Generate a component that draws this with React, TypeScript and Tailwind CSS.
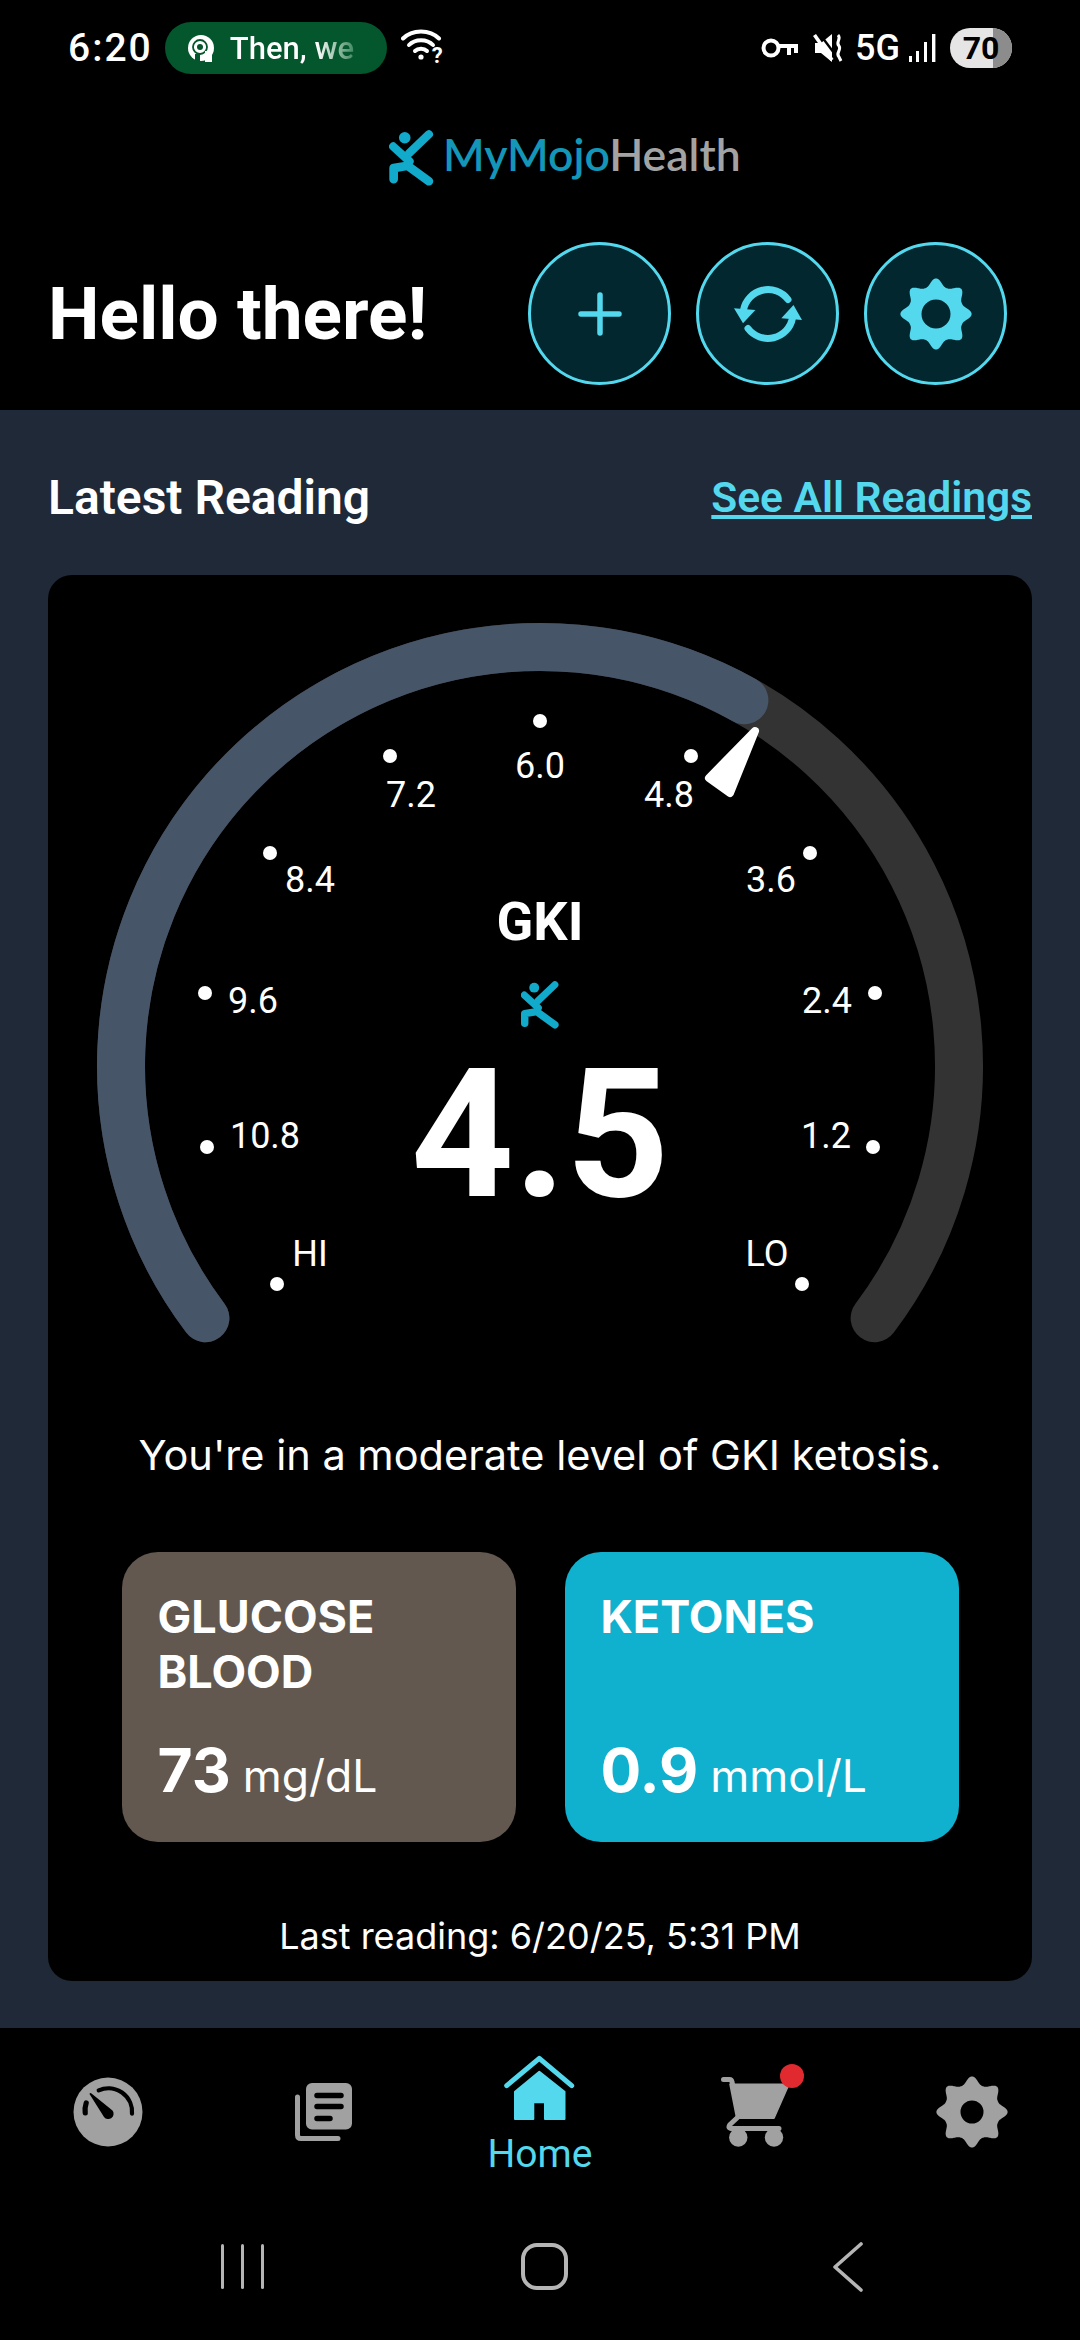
import React from "react";

const CYAN = "#53d8ee";

// point on the gauge ring, angle in degrees from 12 o'clock
const polar = (deg: number, r: number, cx = 492, cy = 491) => {
  const a = (deg * Math.PI) / 180;
  return [cx + r * Math.sin(a), cy - r * Math.cos(a)];
};

const arc = (from: number, to: number, r: number) => {
  const [x1, y1] = polar(from, r);
  const [x2, y2] = polar(to, r);
  const large = to - from > 180 ? 1 : 0;
  return `M${x1} ${y1} A${r} ${r} 0 ${large} 1 ${x2} ${y2}`;
};

const dots = [
  [492, 146], [342, 181], [643, 181], [222, 278], [762, 278], [157, 418],
  [827, 418], [159, 572], [825, 572], [229, 709], [754, 709],
];

const labels = [
  { text: "6.0", pos: "left-[492px] top-[191px]" },
  { text: "7.2", pos: "left-[363px] top-[220px]" },
  { text: "4.8", pos: "left-[621px] top-[220px]" },
  { text: "8.4", pos: "left-[262px] top-[305px]" },
  { text: "3.6", pos: "left-[723px] top-[305px]" },
  { text: "9.6", pos: "left-[205px] top-[426px]" },
  { text: "2.4", pos: "left-[779px] top-[426px]" },
  { text: "10.8", pos: "left-[217px] top-[561px]" },
  { text: "1.2", pos: "left-[778px] top-[561px]" },
  { text: "HI", pos: "left-[262px] top-[679px]" },
  { text: "LO", pos: "left-[719px] top-[679px]" },
];

function gearPath() {
  const pts: string[] = [];
  for (let i = 0; i < 320; i++) {
    const t = (i / 320) * Math.PI * 2;
    const r = 28 + 7.6 * Math.pow((Math.cos(8 * t) + 1) / 2, 1.4);
    pts.push(`${(36 + r * Math.sin(t)).toFixed(2)} ${(36 - r * Math.cos(t)).toFixed(2)}`);
  }
  return `M${pts.join("L")}Z`;
}

function Gear({ color, hole }: { color: string; hole: number }) {
  const ring = `M${36 - hole} 36a${hole} ${hole} 0 1 0 ${hole * 2} 0a${hole} ${hole} 0 1 0 ${-hole * 2} 0Z`;
  return (
    <svg width="72" height="72" viewBox="0 0 72 72">
      <path d={gearPath() + ring} fill={color} fillRule="evenodd" />
    </svg>
  );
}

function MojoMark({ className }: { className: string }) {
  return (
    <svg className={className} viewBox="9 9 46 58" fill="none" stroke="#12aacb" strokeLinecap="round" strokeLinejoin="round">
      <circle cx="25" cy="17" r="6" fill="#12aacb" stroke="none" />
      <path d="M29.5 33 L50 13.5" strokeWidth="8.5" />
      <path d="M13 26 L30 41.5" strokeWidth="8.5" />
      <path d="M13.5 60 V48.5 L28 46 L50 62" strokeWidth="9" />
    </svg>
  );
}

function StatusBar() {
  return (
    <div className="flex h-[96px] items-center pl-[68px] pr-[68px] text-white font-['Roboto',sans-serif]">
      <span className="text-[39px] font-medium leading-none tracking-[2px]">6:20</span>
      <div className="ml-[12px] flex h-[52px] w-[222px] items-center rounded-full bg-[#04562c] pl-[22px]">
        <svg width="28" height="28" viewBox="0 0 28 28">
          <circle cx="14" cy="14" r="13" fill="#fff" />
          <circle cx="13" cy="13" r="7" fill="none" stroke="#04562c" strokeWidth="1.8" />
          <circle cx="13" cy="13" r="3" fill="#04562c" />
          <rect x="18" y="17" width="7" height="11" fill="#fff" />
          <rect x="8" y="20" width="5" height="8" fill="#04562c" />
        </svg>
        <span className="ml-[15px] bg-gradient-to-r from-white from-70% to-[#3f8a63] bg-clip-text text-[31px] font-medium leading-none text-transparent">
          Then, we
        </span>
      </div>
      <div className="relative ml-[14px] h-[40px] w-[42px]">
        <svg width="42" height="40" viewBox="0 0 42 40" fill="none" stroke="#fff" strokeWidth="4" strokeLinecap="round">
          <path d="M2 10.5 C11 1 29 1 38 10.5" />
          <path d="M8 17 C14 10.5 26 10.5 32 17" />
          <path d="M14 23 C17 20 23 20 26 23" />
          <circle cx="20" cy="29" r="2.6" fill="#fff" stroke="none" />
        </svg>
        <span className="absolute right-[0px] top-[17px] text-[22px] font-bold leading-none">?</span>
      </div>
      <div className="ml-auto flex items-center">
        <svg width="38" height="22" viewBox="0 0 38 22" fill="none" stroke="#fff" strokeWidth="4">
          <circle cx="10" cy="11" r="7.5" />
          <path d="M17 9 H37 M28 9 V18 M35 9 V16" />
        </svg>
        <svg className="ml-[14px]" width="30" height="30" viewBox="0 0 30 30" fill="none">
          <path d="M2 10 H8 L19 1 V29 L8 20 H2Z" fill="#fff" />
          <path d="M6 0 L24 24" stroke="#000" strokeWidth="2.4" />
          <path d="M1.5 2 L19 27" stroke="#fff" strokeWidth="3.6" />
          <path d="M25 2 C29 6 22 9 26 13 C29 17 22 20 26 24 L28 28" stroke="#fff" strokeWidth="3" />
        </svg>
        <span className="ml-[12px] text-[36px] font-medium leading-none">5G</span>
        <svg className="ml-[9px]" width="27" height="30" viewBox="0 0 27 30" fill="#fff">
          <rect x="0" y="23" width="3" height="6" />
          <rect x="7" y="18" width="3" height="11" />
          <rect x="15" y="9" width="3" height="20" />
          <rect x="23" y="1" width="3.4" height="28" />
        </svg>
        <div className="relative ml-[14px] flex h-[40px] w-[62px] items-center justify-center overflow-hidden rounded-full bg-[#e5e5e5]">
          <div className="absolute bottom-0 right-0 top-0 w-[19px] bg-[#8c8c8c]" />
          <span className="relative text-[32px] font-bold leading-none text-black">70</span>
        </div>
      </div>
    </div>
  );
}

function IconButton({ children }: { children: React.ReactNode }) {
  return (
    <button className="flex h-[143px] w-[143px] items-center justify-center rounded-full border-[3px] border-[#53d8ee] bg-[#03272f]">
      {children}
    </button>
  );
}

function Header() {
  return (
    <div className="bg-black pb-[25px]">
      <StatusBar />
      <div className="mt-[34px] flex h-[56px] items-center pl-[389px]">
        <MojoMark className="h-[56px] w-[45px]" />
        <span className="ml-[9px] mt-[-8px] font-['Lato',sans-serif] text-[44.5px] font-semibold leading-none text-[#1396b8]">
          MyMojo<span className="text-[#a3a3a3]">Health</span>
        </span>
      </div>
      <div className="mt-[56px] flex items-center pl-[48px] pr-[73px]">
        <h1 className="mt-[2px] font-['Roboto',sans-serif] text-[73px] font-bold leading-none text-white">Hello there!</h1>
        <div className="ml-auto flex gap-[25px]">
          <IconButton>
            <svg width="44" height="44" viewBox="0 0 44 44" stroke={CYAN} strokeWidth="5.5" strokeLinecap="round">
              <path d="M22 3 V41 M3 22 H41" />
            </svg>
          </IconButton>
          <IconButton>
            <svg width="72" height="72" viewBox="-36 -36 72 72" fill={CYAN}>
              <path d="M-24.5 -4 A25 25 0 0 1 20 -14.5 M24.5 4 A25 25 0 0 1 -20 14.5" fill="none" stroke={CYAN} strokeWidth="7" strokeLinecap="round" />
              <path d="M-34 -5.7 L-12.6 -4 L-25 9.3Z M34 6 L13.3 4.3 L25.5 -9Z" />
            </svg>
          </IconButton>
          <IconButton>
            <Gear color={CYAN} hole={14.5} />
          </IconButton>
        </div>
      </div>
    </div>
  );
}

function Gauge() {
  return (
    <div className="relative h-[852px] w-full">
      <svg className="absolute left-0 top-0" width="984" height="852" viewBox="0 0 984 852" fill="none">
        <path d={arc(-127, 127, 419)} stroke="#333333" strokeWidth="48" strokeLinecap="round" />
        <path d={arc(-127, 29.2, 419)} stroke="#475569" strokeWidth="48" strokeLinecap="round" />
        {dots.map(([x, y]) => (
          <circle key={`${x}-${y}`} cx={x} cy={y} r="7" fill="#fff" />
        ))}
        <path d="M707 156 L661 203 L682 218Z" fill="#fff" stroke="#fff" strokeWidth="8" strokeLinejoin="round" />
      </svg>
      {labels.map((l) => (
        <span
          key={l.text}
          className={`absolute ${l.pos} -translate-x-1/2 -translate-y-1/2 font-['Roboto',sans-serif] text-[36px] leading-none text-white`}
        >
          {l.text}
        </span>
      ))}
      <span className="absolute left-[492px] top-[347px] -translate-x-1/2 -translate-y-1/2 font-['Roboto',sans-serif] text-[54px] font-bold leading-none text-white">
        GKI
      </span>
      <MojoMark className="absolute left-[473px] top-[406px] h-[48px] w-[38px]" />
      <span className="absolute left-[492px] top-[560px] -translate-x-1/2 -translate-y-1/2 font-['Roboto',sans-serif] text-[180px] font-bold leading-none text-white">
        4.5
      </span>
    </div>
  );
}

function ReadingTile({ title, value, unit, bg }: { title: React.ReactNode; value: string; unit: string; bg: string }) {
  return (
    <div className={`flex h-[290px] w-[394px] flex-col rounded-[36px] px-[36px] ${bg} font-['Inter',sans-serif] text-white`}>
      <div className="mt-[37px] h-[110px] text-[45px] font-bold leading-[55px]">{title}</div>
      <div className="mt-[41px] flex items-baseline">
        <span className="text-[60.5px] font-bold leading-none">{value}</span>
        <span className="ml-[12px] text-[44.5px] leading-none">{unit}</span>
      </div>
    </div>
  );
}

function BottomNav() {
  return (
    <div className="bg-black">
      <div className="grid h-[192px] grid-cols-5">
        <div className="flex justify-center pt-[49px]">
          <svg width="70" height="70" viewBox="0 0 70 70" fill="none">
            <circle cx="35" cy="35" r="34.5" fill="#a1a1a1" />
            <path d="M25.7 13.3 A23.7 23.7 0 0 1 59 36.7" stroke="#000" strokeWidth="4.2" strokeLinecap="round" />
            <path d="M13.2 26 Q11.5 31 12.2 36" stroke="#000" strokeWidth="5.2" strokeLinecap="round" />
            <path d="M16.5 17 Q17 15.5 18.5 16.5 L39.5 33.5 A5.3 5.3 0 1 1 31 40Z" fill="#000" />
          </svg>
        </div>
        <div className="flex justify-center pt-[55px]">
          <svg width="58" height="58" viewBox="0 0 58 58" fill="none">
            <rect x="11" y="0" width="46" height="46.5" rx="6" fill="#a1a1a1" />
            <path d="M22 12.5 H46 M22 23.5 H46 M22 35.5 H35" stroke="#000" strokeWidth="5.5" strokeLinecap="round" />
            <path d="M2.5 14 V52 Q2.5 55.5 6 55.5 H43" stroke="#a1a1a1" strokeWidth="5" strokeLinecap="round" />
          </svg>
        </div>
        <div className="flex flex-col items-center pt-[17px]">
          <svg width="120" height="75" viewBox="0 0 120 75" fill="none">
            <path d="M26.7 40.7 L59.3 13.3 L91.7 40.7" stroke={CYAN} strokeWidth="5" strokeLinecap="round" strokeLinejoin="round" />
            <path
              d="M59.3 26.7 L35 46.7 V74 H53.3 V57.3 H65 V74 H84.5 V46.7Z"
              fill={CYAN}
              stroke={CYAN}
              strokeWidth="2"
              strokeLinejoin="round"
            />
          </svg>
          <span className="mt-[12px] font-['Roboto',sans-serif] text-[39px] leading-[44px] text-[#53d8ee]">Home</span>
        </div>
        <div className="flex justify-center pt-[49px]">
          <div className="relative h-[70px] w-[70px]">
            <svg width="70" height="70" viewBox="0 0 70 70" fill="none">
              <path d="M2.5 2.5 H8.5 Q10.7 2.5 11 5 L12 9" stroke="#a1a1a1" strokeWidth="5" strokeLinecap="round" />
              <path d="M9 7.3 H68 L53 41.3 H15.7Z" fill="#a1a1a1" stroke="#a1a1a1" strokeWidth="1.5" strokeLinejoin="round" />
              <path d="M16 41 L9 47.5 Q6.5 51 10 51.5 H58" stroke="#a1a1a1" strokeWidth="5" strokeLinecap="round" strokeLinejoin="round" />
              <circle cx="17.3" cy="60.5" r="9.2" fill="#a1a1a1" />
              <circle cx="53" cy="60.5" r="9.2" fill="#a1a1a1" />
            </svg>
            <div className="absolute left-[59px] top-[-13px] h-[24px] w-[24px] rounded-full bg-[#e02a2f]" />
          </div>
        </div>
        <div className="flex justify-center pt-[48px]">
          <Gear color="#a1a1a1" hole={11.5} />
        </div>
      </div>
      {/* android nav bar */}
      <div className="relative h-[120px]">
        <div className="absolute left-[221px] top-[24px] flex gap-[17px]">
          <div className="h-[45px] w-[3px] rounded-full bg-[#b5b5b5]" />
          <div className="h-[45px] w-[3px] rounded-full bg-[#b5b5b5]" />
          <div className="h-[45px] w-[3px] rounded-full bg-[#b5b5b5]" />
        </div>
        <div className="absolute left-[521px] top-[23px] h-[47px] w-[47px] rounded-[16px] border-[4px] border-[#b5b5b5]" />
        <svg className="absolute left-[831px] top-[22px]" width="34" height="50" viewBox="0 0 34 50" fill="none">
          <path d="M30 2 L4 25 L30 48" stroke="#b5b5b5" strokeWidth="3.6" strokeLinecap="round" strokeLinejoin="round" />
        </svg>
      </div>
    </div>
  );
}

export default function App() {
  return (
    <div className="flex h-[2340px] w-[1080px] flex-col overflow-hidden bg-black">
      <Header />
      <main className="h-[1618px] bg-[#1f2937] px-[48px] pt-[60px]">
        <div className="flex items-center justify-between font-['Roboto',sans-serif]">
          <h2 className="text-[48px] font-semibold leading-[56px] text-white">Latest Reading</h2>
          <a className="text-[42.5px] font-semibold leading-[56px] text-[#53d8ee] underline">See All Readings</a>
        </div>
        <section className="mt-[49px] h-[1406px] rounded-[24px] bg-black">
          <Gauge />
          <p className="text-center font-['Inter',sans-serif] text-[41.5px] leading-[56px] text-white">
            You're in a moderate level of GKI ketosis.
          </p>
          <div className="mt-[69px] flex justify-center gap-[49px]">
            <ReadingTile title={<>GLUCOSE<br />BLOOD</>} value="73" unit="mg/dL" bg="bg-[#62584f]" />
            <ReadingTile title="KETONES" value="0.9" unit="mmol/L" bg="bg-[#10b0cf]" />
          </div>
          <p className="mt-[70px] text-center font-['Inter',sans-serif] text-[36px] leading-[48px] text-white">
            Last reading: 6/20/25, 5:31 PM
          </p>
        </section>
      </main>
      <BottomNav />
    </div>
  );
}
